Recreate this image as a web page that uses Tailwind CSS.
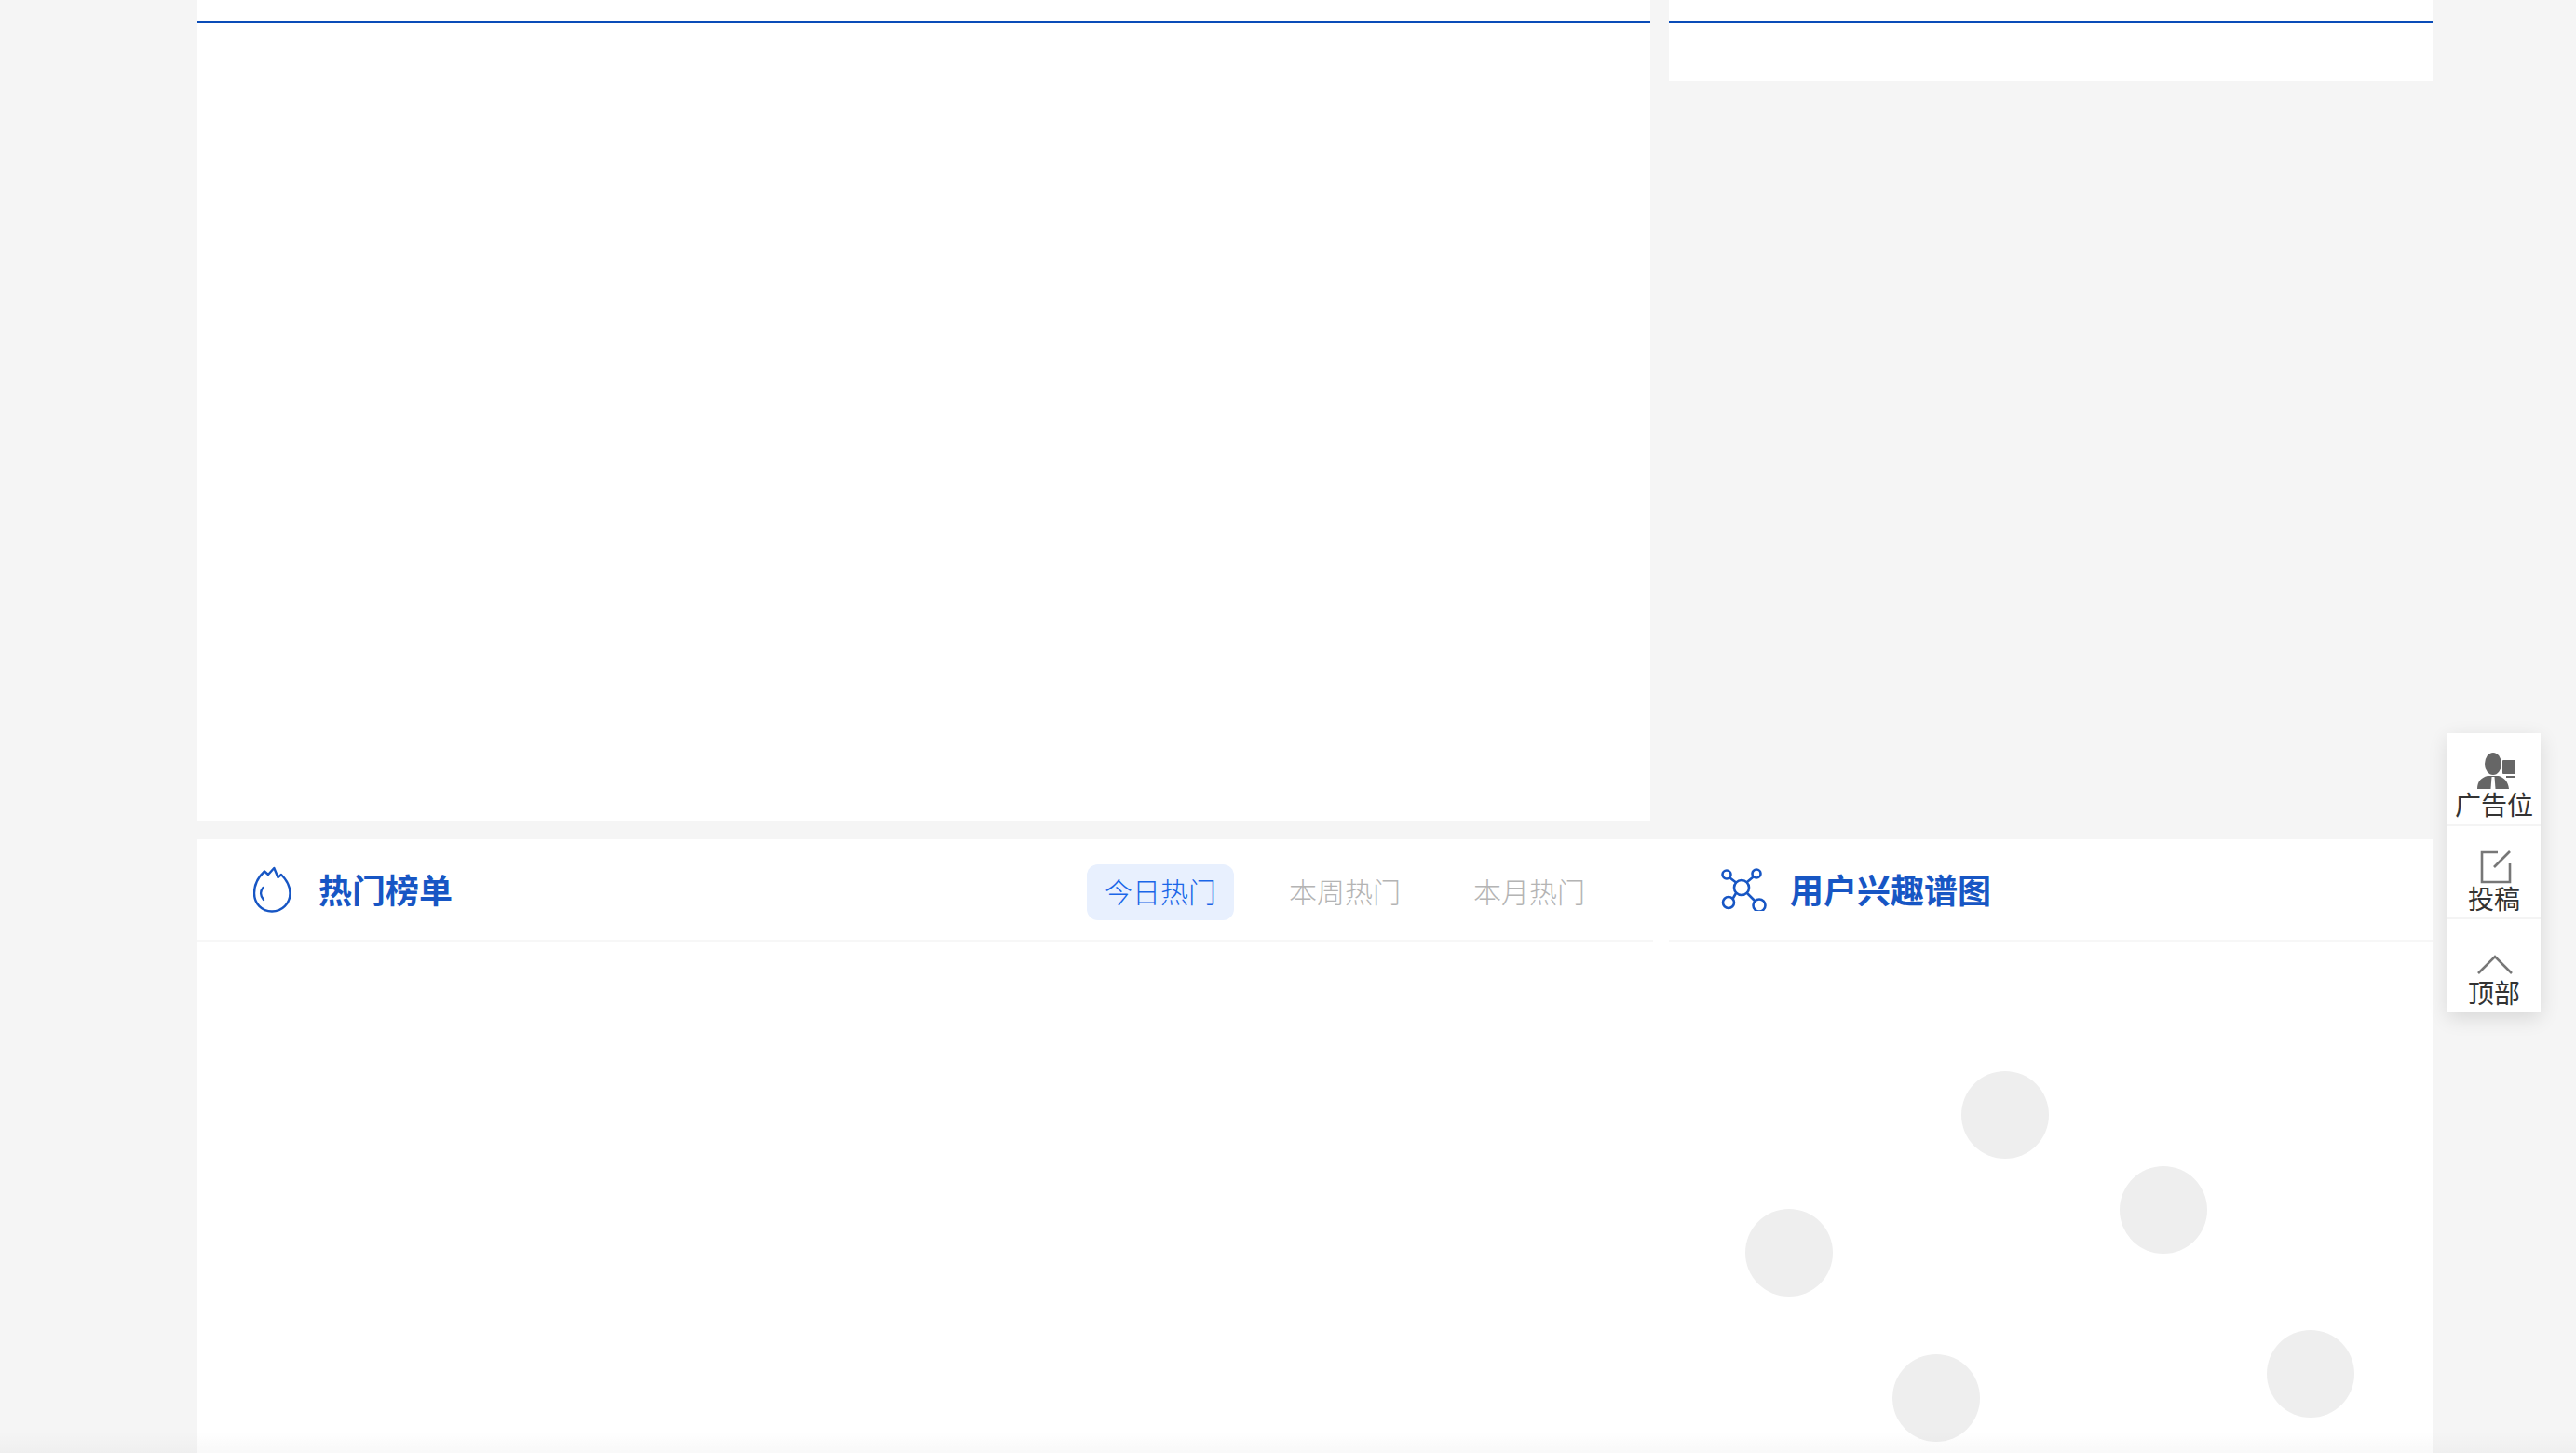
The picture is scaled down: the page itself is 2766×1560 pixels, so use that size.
<!DOCTYPE html>
<html lang="zh-CN">
<head>
<meta charset="utf-8">
<script src="https://cdn.jsdelivr.net/npm/@tailwindcss/browser@4"></script>
<title>热门榜单</title>
</head>
<body class="m-0">
<div class="relative h-[1560px] w-[2766px] overflow-hidden bg-[#f5f5f5] font-['Noto_Sans_CJK_SC','Noto_Sans',sans-serif]">
  <div class="ml-[212px] flex w-[2400px] flex-col gap-[20px]">
    <div class="flex h-[881px] gap-[20px]">
      <section class="w-[1560px] bg-white">
        <div class="h-[25px] border-b-[2px] border-[#0a4cb8]"></div>
      </section>
      <section class="h-[87px] w-[820px] bg-white">
        <div class="h-[25px] border-b-[2px] border-[#0a4cb8]"></div>
      </section>
    </div>
    <div class="flex h-[659px] justify-between bg-white">
      <section class="w-[1563px]">
        <div class="flex h-[110px] items-center border-b-2 border-[#f7f7f7] pl-[60px] pr-[54px]">
          <svg class="mr-[30px] h-[50px] w-[40px] shrink-0" viewBox="0 0 40 50" fill="none" stroke="#1756c4" stroke-width="2.4" stroke-linejoin="round" stroke-linecap="round">
            <path d="M22.3 2 L26.5 12 L30 9 C36 15 39.5 22 39.5 29 C39.5 40 31 48.5 20 48.5 C9 48.5 1 40 1 29 C1 19 6 11 12 5.5 L16 9 Z"/>
            <path d="M10.5 23 C7 27 7.5 32 11 36"/>
          </svg>
          <h2 class="mb-[3px] text-[36px] leading-[50px] font-bold text-[#1756c4]">热门榜单</h2>
          <div class="ml-auto mt-[6px] flex gap-[40px] text-[30px] font-light">
            <span class="flex h-[60px] w-[158px] items-center justify-center rounded-[12px] bg-[#e8f0fe] pb-[3px] text-[#1a66e8]">今日热门</span>
            <span class="flex h-[60px] w-[158px] items-center justify-center pb-[3px] text-[#b4b4b4]">本周热门</span>
            <span class="flex h-[60px] w-[158px] items-center justify-center pb-[3px] text-[#b4b4b4]">本月热门</span>
          </div>
        </div>
      </section>
      <section class="relative w-[820px]">
        <div class="flex h-[110px] items-center border-b-2 border-[#f7f7f7] pl-[56px]">
          <svg class="mr-[24px] h-[46px] w-[50px] shrink-0" viewBox="0 0 50 46" fill="none" stroke="#1756c4" stroke-width="2.6">
            <circle cx="22" cy="21" r="8"/>
            <circle cx="6" cy="7" r="4.5"/>
            <circle cx="38" cy="6" r="4.5"/>
            <circle cx="8" cy="37" r="6"/>
            <circle cx="41" cy="40" r="6.5"/>
            <path d="M9.5 10.5 L16 15.5 M34.5 9.5 L28 15 M12.5 33 L16 27 M28 27 L36.5 35.5"/>
          </svg>
          <h2 class="mb-[3px] text-[36px] leading-[50px] font-bold text-[#1756c4]">用户兴趣谱图</h2>
        </div>
        <span class="absolute left-[314px] top-[249px] h-[94px] w-[94px] rounded-full bg-[#eeeeee]"></span>
        <span class="absolute left-[484px] top-[351px] h-[94px] w-[94px] rounded-full bg-[#eeeeee]"></span>
        <span class="absolute left-[82px] top-[397px] h-[94px] w-[94px] rounded-full bg-[#eeeeee]"></span>
        <span class="absolute left-[240px] top-[553px] h-[94px] w-[94px] rounded-full bg-[#eeeeee]"></span>
        <span class="absolute left-[642px] top-[527px] h-[94px] w-[94px] rounded-full bg-[#eeeeee]"></span>
      </section>
    </div>
  </div>

  <div class="pointer-events-none absolute inset-x-0 bottom-0 h-[24px] bg-gradient-to-b from-transparent to-black/[0.025]"></div>

  <aside class="absolute left-[2628px] top-[787px] w-[100px] divide-y-2 divide-[#f4f4f4] bg-white text-[28px] leading-[30px] text-[#333333] shadow-[0_6px_20px_rgba(0,0,0,0.12)]">
    <a class="flex h-[100px] flex-col items-center justify-end pb-[7px]">
      <svg class="ml-[6px] h-[40px] w-[42px]" viewBox="0 0 42 40" fill="#666666">
        <ellipse cx="17" cy="12" rx="9" ry="12"/>
        <path d="M0 39 C0 31 4 27 11 25 L23 25 C29 27 33 31 34 39 Z"/>
        <path d="M15.5 26 L18.5 26 L19.5 39 L14.5 39 Z" fill="#ffffff"/>
        <rect x="27" y="8" width="14" height="15" rx="1"/>
        <rect x="31" y="25" width="10" height="2"/>
      </svg>
      <span>广告位</span>
    </a>
    <a class="flex h-[100px] flex-col items-center justify-end pb-[6px]">
      <svg class="ml-[3px] h-[36px] w-[34px]" viewBox="0 0 34 36" fill="none" stroke="#777777" stroke-width="2.6">
        <path d="M19 2 L2 2 L2 34 L32 34 L32 14"/>
        <path d="M32 1 L15 18"/>
      </svg>
      <span>投稿</span>
    </a>
    <a class="flex h-[100px] flex-col items-center justify-end pb-[7px]">
      <svg class="ml-[2px] mb-[3px] h-[22px] w-[40px]" viewBox="0 0 40 22" fill="none" stroke="#777777" stroke-width="2.6">
        <path d="M2 20 L20 2 L38 20"/>
      </svg>
      <span>顶部</span>
    </a>
  </aside>
</div>
</body>
</html>
